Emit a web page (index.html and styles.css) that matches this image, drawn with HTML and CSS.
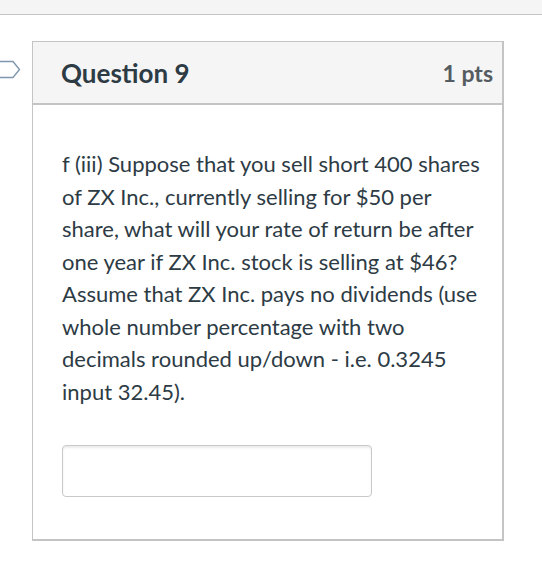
FILE: index.html
```html
<!DOCTYPE html>
<html lang="en">
<head>
<meta charset="utf-8">
<link rel="stylesheet" href="styles.css">
</head>
<body>
<div class="topbar"></div>
<div class="page">
  <div class="marker">
    <svg width="22" height="20" viewBox="0 0 22 20"><path d="M-4 1.5 H13 L19.5 9.5 L13 17.5 H-4" fill="none" stroke="#7f97ad" stroke-width="1.4"/></svg>
  </div>
  <div class="card">
    <div class="card-head">
      <h2 class="q-title">Question 9</h2>
      <span class="q-pts">1 pts</span>
    </div>
    <div class="card-body">
      <p class="q-text">f (iii) Suppose that you sell short 400 shares of ZX Inc., currently selling for $50 per share, what will your rate of return be after one year if ZX Inc. stock is selling at $46? Assume that ZX Inc. pays no dividends (use whole number percentage with two decimals rounded up/down - i.e. 0.3245 input 32.45).</p>
      <input class="answer" type="text">
    </div>
  </div>
</div>
</body>
</html>
```
FILE: styles.css
```css
html, body { margin: 0; padding: 0; background: #fff; }
body { font-family: Lato, "Open Sans", sans-serif; color: #2d3b45; width: 542px; height: 568px; overflow: hidden; }
.topbar { height: 14px; background: #f5f5f5; border-bottom: 1px solid #c4c4c4; }
.page { position: relative; padding: 26px 0 0 32px; }
.marker { position: absolute; left: 0; top: 45px; }
.marker svg { display: block; }
.card { width: 469px; border: 1px solid #c4c4c4; border-right-width: 2px; border-bottom-width: 2px; box-sizing: content-box; }
.card-head { height: 61px; background: #f5f5f5; border-bottom: 2px solid #c4c4c4; display: flex; align-items: center; justify-content: space-between; padding: 0 9px 0 28px; }
.q-title { margin: 0; font-size: 26px; font-weight: 700; color: #2d3b45; letter-spacing: 0; }
.q-pts { font-size: 23px; font-weight: 700; color: #555c61; }
.card-body { padding: 43px 20px 42px 29px; }
.q-text { margin: 0; font-size: 22px; line-height: 32.5px; }
.answer { display: block; margin-top: 37px; width: 310px; height: 52px; box-sizing: border-box; border: 1px solid #c9c9c9; border-radius: 4px; box-shadow: inset 0 2px 2px rgba(0,0,0,0.08); background: #fff; }
```
